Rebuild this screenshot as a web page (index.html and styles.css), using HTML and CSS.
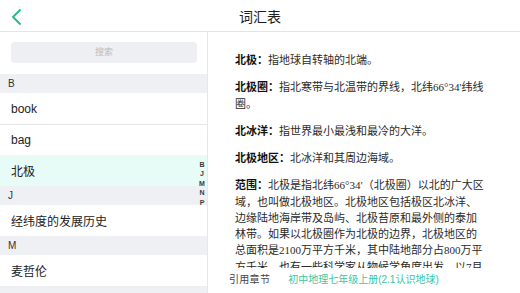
FILE: index.html
```html
<!DOCTYPE html>
<html lang="zh">

<head>
    <meta charset="UTF-8" />
    <meta name="viewport" content="width=device-width, initial-scale=1.0" />
    <title>词汇表</title>
    <link rel="stylesheet" href="styles.css">
</head>

<body>
    <div class="app">
        <header class="topbar">
            <a class="back" href="#">
                <svg width="12" height="18" viewBox="0 0 12 18">
                    <polyline points="9.5,1.5 2,9 9.5,16.5" fill="none" stroke="#1fb88f" stroke-width="1.8" />
                </svg>
            </a>
            <h1 class="title">词汇表</h1>
        </header>

        <div class="main">
            <aside class="sidebar">
                <div class="search-wrap">
                    <div class="search">搜索</div>
                </div>
                <div class="list">
                    <div class="section">B</div>
                    <div class="item">
                        <span>book</span>
                    </div>
                    <div class="item">
                        <span>bag</span>
                    </div>
                    <div class="item active">
                        <span>北极</span>
                    </div>
                    <div class="section">J</div>
                    <div class="item">
                        <span>经纬度的发展历史</span>
                    </div>
                    <div class="section">M</div>
                    <div class="item">
                        <span>麦哲伦</span>
                    </div>
                    <div class="section"></div>

                    <ul class="index">
                        <li>B</li>
                        <li>J</li>
                        <li>M</li>
                        <li>N</li>
                        <li>P</li>
                    </ul>
                </div>
            </aside>

            <section class="detail">
                <div class="content">
                    <p><b>北极：</b>指地球自转轴的北端。</p>
                    <p><b>北极圈：</b>指北寒带与北温带的界线，北纬66°34'纬线圈。</p>
                    <p><b>北冰洋：</b>指世界最小最浅和最冷的大洋。</p>
                    <p><b>北极地区：</b>北冰洋和其周边海域。</p>
                    <p><b>范围：</b>北极是指北纬66°34′（北极圈）以北的广大区域，也叫做北极地区。北极地区包括极区北冰洋、边缘陆地海岸带及岛屿、北极苔原和最外侧的泰加林带。如果以北极圈作为北极的边界，北极地区的总面积是2100万平方千米，其中陆地部分占800万平方千米。也有一些科学家从物候学角度出发，以7月份平均10℃等温线作为北极地区的南界。</p>
                </div>
                <footer class="source">
                    <span class="source-label">引用章节</span>
                    <a class="source-link" href="#">初中地理七年级上册(2.1认识地球)</a>
                </footer>
            </section>
        </div>
    </div>
</body>

</html>
```

FILE: styles.css
```css
* {
    margin: 0;
    padding: 0;
    box-sizing: border-box;
}

body {
    width: 520px;
    height: 293px;
    overflow: hidden;
    background: #fff;
    font-family: "Liberation Sans", "Noto Sans CJK SC", sans-serif;
    color: #222;
}

.app {
    display: flex;
    flex-direction: column;
    height: 293px;
}

/* top bar */
.topbar {
    position: relative;
    height: 32px;
    flex-shrink: 0;
    display: flex;
    align-items: center;
    justify-content: center;
    border-bottom: 1px solid #e3e4e6;
}

.back {
    position: absolute;
    left: 11px;
    top: 8px;
    display: block;
    width: 12px;
    height: 18px;
}

.back svg {
    display: block;
}

.title {
    font-size: 14px;
    font-weight: normal;
    color: #1e1e1e;
    padding-top: 1px;
}

.main {
    flex: 1;
    display: flex;
    min-height: 0;
}

/* left list */
.sidebar {
    width: 208px;
    flex-shrink: 0;
    border-right: 1px solid #e6e7e9;
    display: flex;
    flex-direction: column;
}

.search-wrap {
    padding: 10px 10px 11px 11px;
}

.search {
    height: 21px;
    border-radius: 4px;
    background: #edeff2;
    color: #b9bcc1;
    font-size: 9px;
    line-height: 21px;
    text-align: center;
}

.list {
    position: relative;
    flex: 1;
    overflow: hidden;
}

.section {
    height: 19px;
    line-height: 19px;
    padding-left: 8px;
    background: #eef0f3;
    font-size: 10px;
    color: #333;
}

.item {
    height: 31px;
    padding-left: 11px;
    display: flex;
    align-items: center;
    font-size: 12px;
    color: #222;
}

.section + .item + .item {
    border-top: 1px solid #e4e5e7;
    background-clip: content-box;
}

.item.active {
    background: #e7fbf7;
}

.index {
    position: absolute;
    right: 1px;
    top: 50%;
    transform: translateY(-50%);
    list-style: none;
    text-align: center;
    width: 8px;
}

.index li {
    font-size: 7px;
    font-weight: bold;
    line-height: 9.5px;
    color: #3a3a3a;
}

/* right detail */
.detail {
    flex: 1;
    display: flex;
    flex-direction: column;
    min-width: 0;
}

.content {
    flex: 1;
    overflow: hidden;
    padding: 20px 0 0 27px;
}

.content p {
    width: 251px;
    font-family: "Liberation Serif", "Noto Sans CJK SC", serif;
    font-size: 11px;
    line-height: 16.25px;
    color: #2a2a2a;
    margin-bottom: 11px;
}

.content b {
    color: #111;
}

.source {
    height: 25px;
    flex-shrink: 0;
    display: flex;
    align-items: center;
    padding: 0 0 4px 21px;
    font-size: 10px;
}

.source-label {
    color: #444;
    letter-spacing: 0.3px;
}

.source-link {
    margin-left: 18px;
    color: #3cc6a2;
    text-decoration: none;
}
```
